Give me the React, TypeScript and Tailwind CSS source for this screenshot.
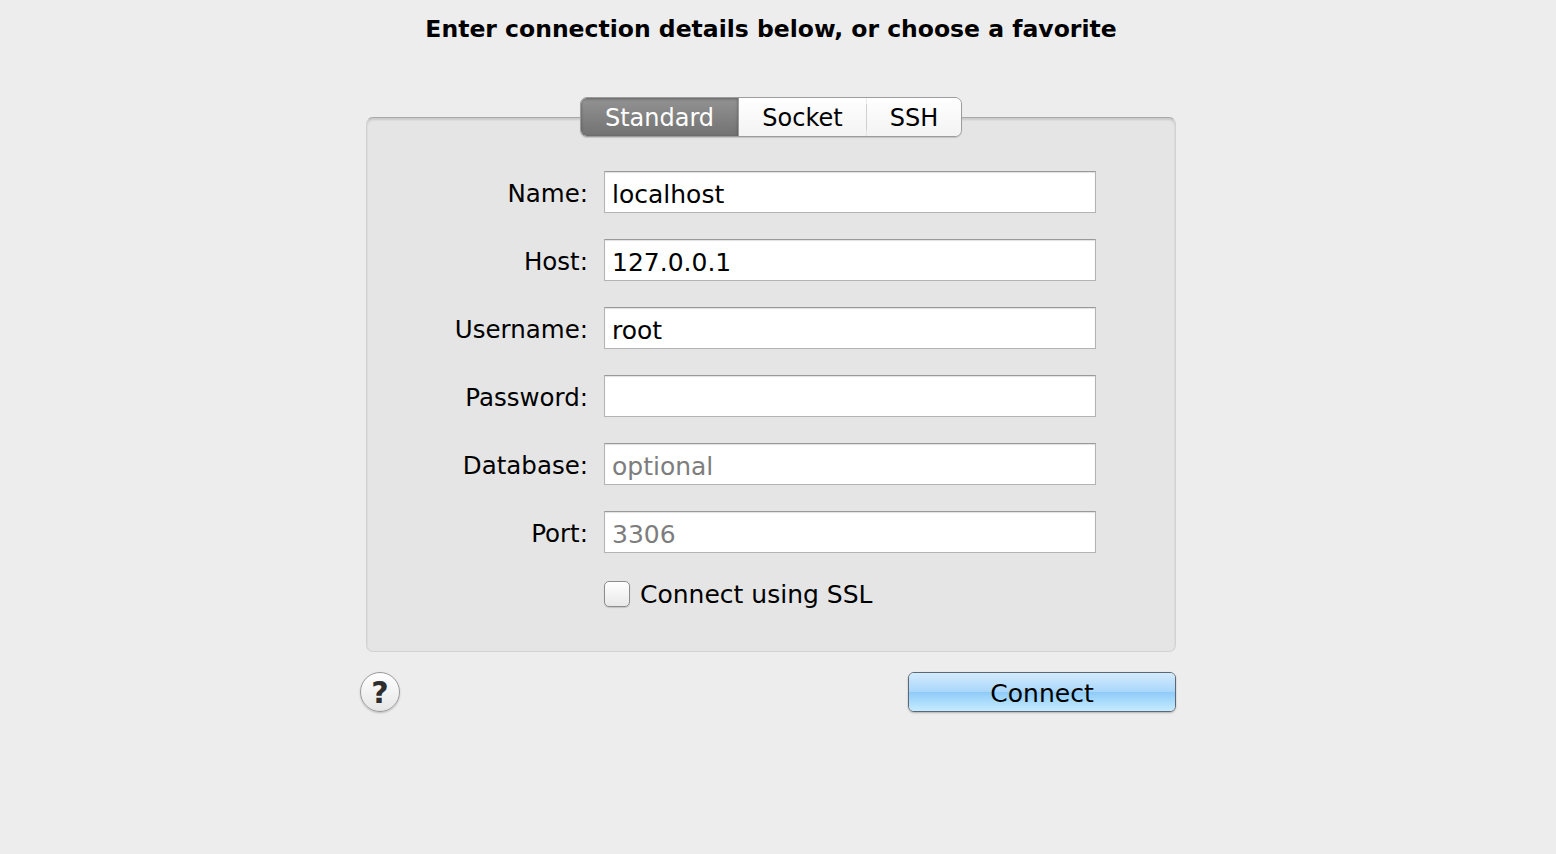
import React from 'react';

const fields = [
  { label: 'Name', value: 'localhost' },
  { label: 'Host', value: '127.0.0.1' },
  { label: 'Username', value: 'root' },
  { label: 'Password', value: '' },
  { label: 'Database', value: '', placeholder: 'optional' },
  { label: 'Port', value: '', placeholder: '3306' },
];

export default function App() {
  return (
    <div className="w-full h-[854px] bg-[#ededed] text-black font-['DejaVu_Sans',sans-serif]">
      <div className="ml-[366px] w-[810px] flex flex-col">
        <h1 className="pt-[14px] h-[97px] text-center text-[23.5px] font-bold leading-[30px]">
          Enter connection details below, or choose a favorite
        </h1>

        {/* Segmented tabs over the box top */}
        <div className="relative z-10 flex justify-center -mb-[20px]">
          <div className="flex h-[40px] rounded-[7px] overflow-hidden border border-[#9c9c9c] shadow-[0_1px_1px_rgba(0,0,0,0.15)] text-[24px] leading-none">
            <div className="w-[157px] flex items-center justify-center pt-[2px] bg-gradient-to-b from-[#939393] to-[#727272] text-white shadow-[inset_0_1px_3px_rgba(0,0,0,0.35)]">
              Standard
            </div>
            <div className="w-[128px] flex items-center justify-center pt-[2px] bg-gradient-to-b from-white to-[#f3f3f3] border-l border-[#9c9c9c]">
              Socket
            </div>
            <div className="flex items-center">
              <div className="w-px h-[26px] bg-[#d0d0d0]" />
            </div>
            <div className="w-[94px] flex items-center justify-center pt-[2px] bg-gradient-to-b from-white to-[#f3f3f3]">
              SSH
            </div>
          </div>
        </div>

        {/* Group box */}
        <div className="rounded-[7px] bg-[#e5e5e5] border border-[#d2d2d2] border-t-[#a9a9a9] shadow-[inset_0_2px_2px_rgba(0,0,0,0.12)] pt-[53px] pb-[44px]">
          <div className="flex flex-col gap-[26px]">
            {fields.map((f) => (
              <div key={f.label} className="flex items-center h-[42px]">
                <div className="w-[222px] text-right text-[24.5px] leading-none pr-[1px] pt-[4px]">{f.label}:</div>
                <div className="ml-[15px] w-[492px] h-[42px] bg-white border border-[#b3b3b3] border-t-[#9a9a9a] shadow-[inset_0_1px_1px_rgba(0,0,0,0.12)] flex items-center pl-[7px] pt-[4px] text-[25px] leading-none">
                  {f.value ? (
                    <span>{f.value}</span>
                  ) : (
                    <span className="text-[#7d7d7d]">{f.placeholder ?? ''}</span>
                  )}
                </div>
              </div>
            ))}
            <div className="flex items-center h-[26px] mt-[2px]">
              <div className="ml-[237px] w-[26px] h-[26px] rounded-[5px] border border-[#8c8c8c] bg-gradient-to-b from-white to-[#e8e8e8] shadow-[0_1px_1px_rgba(0,0,0,0.15)]" />
              <span className="ml-[10px] text-[25px] leading-none">Connect using SSL</span>
            </div>
          </div>
        </div>

        {/* Bottom row */}
        <div className="flex items-center justify-between mt-[20px] -ml-[6px]">
          <div className="w-[40px] h-[40px] rounded-full border border-[#9a9a9a] bg-gradient-to-b from-white to-[#e6e6e6] shadow-[0_1px_2px_rgba(0,0,0,0.2)] flex items-center justify-center pt-[2px] text-[30px] font-bold text-[#2e2e2e] leading-none">
            ?
          </div>
          <div className="relative w-[268px] h-[40px] rounded-[6px] border border-[#5d6674] overflow-hidden shadow-[0_1px_2px_rgba(0,0,0,0.25)]">
            <div className="absolute inset-x-0 top-0 h-1/2 bg-gradient-to-b from-[#d3ebfd] to-[#a9d6fa]" />
            <div className="absolute inset-x-0 bottom-0 h-1/2 bg-gradient-to-b from-[#8ecbf8] to-[#c6ecff]" />
            <div className="relative h-full flex items-center justify-center pt-[2px] text-[25px] leading-none">Connect</div>
          </div>
        </div>
      </div>
    </div>
  );
}
